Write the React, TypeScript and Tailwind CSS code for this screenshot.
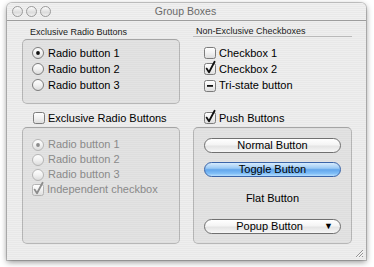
import React from "react";

const FONT = { fontFamily: '"Liberation Sans", Arial, sans-serif' };

function CheckBox({ state, disabled }: { state: "off" | "on" | "mixed"; disabled?: boolean }) {
  const border = disabled ? "#b4b4b4" : "#7c7c7c";
  const mark = disabled ? "#8c8c8c" : "#111111";
  return (
    <svg width="12" height="12" viewBox="0 0 12 12" className="shrink-0 overflow-visible">
      <defs>
        <linearGradient id="cbg" x1="0" y1="0" x2="0" y2="1">
          <stop offset="0" stopColor="#ffffff" />
          <stop offset="0.5" stopColor="#f1f1f1" />
          <stop offset="1" stopColor="#dcdcdc" />
        </linearGradient>
      </defs>
      <rect x="0.5" y="0.5" width="11" height="11" rx="2" fill="url(#cbg)" stroke={border} />
      {state === "on" && (
        <path d="M2.6 5.6 L5 9.2 L10.6 -1.2" stroke={mark} strokeWidth="1.8" fill="none" strokeLinecap="round" strokeLinejoin="round" />
      )}
      {state === "mixed" && <rect x="3" y="5" width="6" height="1.8" fill={mark} />}
    </svg>
  );
}

function Radio({ on, disabled }: { on?: boolean; disabled?: boolean }) {
  const border = disabled ? "#b4b4b4" : "#7c7c7c";
  const dot = disabled ? "#8c8c8c" : "#111111";
  return (
    <svg width="12" height="12" viewBox="0 0 12 12" className="shrink-0">
      <defs>
        <linearGradient id="rbg" x1="0" y1="0" x2="0" y2="1">
          <stop offset="0" stopColor="#ffffff" />
          <stop offset="0.5" stopColor="#f1f1f1" />
          <stop offset="1" stopColor="#d9d9d9" />
        </linearGradient>
      </defs>
      <circle cx="6" cy="6" r="5.5" fill="url(#rbg)" stroke={border} />
      {on && <circle cx="6" cy="6" r="1.9" fill={dot} />}
    </svg>
  );
}

function RadioRow({ label, on, disabled, h = "h-[16px]" }: { label: string; on?: boolean; disabled?: boolean; h?: string }) {
  return (
    <div className={`${h} flex items-center gap-[4px]`}>
      <Radio on={on} disabled={disabled} />
      <span className={`text-[11px] leading-none ${disabled ? "text-[#8a8a8a]" : "text-black"}`}>{label}</span>
    </div>
  );
}

function CheckRow({ label, state, disabled, h = "h-[16px]" }: { label: string; state: "off" | "on" | "mixed"; disabled?: boolean; h?: string }) {
  return (
    <div className={`${h} flex items-center gap-[3px]`}>
      <CheckBox state={state} disabled={disabled} />
      <span className={`text-[11px] leading-none ${disabled ? "text-[#8a8a8a]" : "text-black"}`}>{label}</span>
    </div>
  );
}

function Light() {
  return (
    <div className="w-[11px] h-[11px] rounded-full border border-[#9a9a9a] bg-[image:linear-gradient(to_bottom,#fbfbfb,#dcdcdc_60%,#f0f0f0)]" />
  );
}

const boxCls =
  "rounded-[5px] border border-[rgba(0,0,0,0.2)] border-t-[rgba(0,0,0,0.28)] bg-[rgba(0,0,0,0.045)]";

const pillCls =
  "h-[15px] rounded-full border border-[#707070] bg-[image:linear-gradient(to_bottom,#ffffff_0%,#f4f4f4_45%,#e4e4e4_55%,#f7f7f7_100%)] flex items-center justify-center text-[11px] leading-none text-black";

export default function App() {
  return (
    <div className="w-[374px] h-[267px] bg-white overflow-hidden" style={FONT}>
      <div className="relative ml-[7px] mt-[3px] w-[359px] h-[257px] rounded-t-[5px] flex flex-col shadow-[0_2px_6px_rgba(0,0,0,0.45),0_0_0_1px_rgba(0,0,0,0.18)] bg-[#ededed] bg-[image:repeating-linear-gradient(to_bottom,#eeeeee_0px,#eeeeee_1px,#e8e8e8_1px,#e8e8e8_2px)]">
        {/* Title bar */}
        <div className="h-[18px] shrink-0 border-b border-[#9d9d9d] rounded-t-[5px] grid grid-cols-[1fr_auto_1fr] items-center bg-[image:repeating-linear-gradient(to_bottom,#f0f0f0_0px,#f0f0f0_1px,#e9e9e9_1px,#e9e9e9_2px)]">
          <div className="flex items-center gap-[3px] pl-[5px]">
            <Light />
            <Light />
            <Light />
          </div>
          <div className="text-[10.5px] leading-none text-[#6a6a6a] pr-[2px]">Group Boxes</div>
          <div />
        </div>

        {/* Content */}
        <div className="flex-1 flex gap-[13px] pl-[15px] pr-[14px] pt-[5px]">
          {/* Left column */}
          <div className="w-[158px] flex flex-col">
            <div className="h-[13px] pl-[8px] text-[9px] leading-[12px] text-[#1a1a1a]">Exclusive Radio Buttons</div>
            <div className={`${boxCls} h-[65px] pt-[5px] pl-[9px]`}>
              <RadioRow label="Radio button 1" on />
              <RadioRow label="Radio button 2" />
              <RadioRow label="Radio button 3" />
            </div>
            <div className="mt-[7px] mb-[2px] pl-[11px]">
              <CheckRow label="Exclusive Radio Buttons" state="off" h="h-[14px]" />
            </div>
            <div className={`${boxCls} h-[117px] pt-[9px] pl-[9px]`}>
              <RadioRow label="Radio button 1" on disabled h="h-[15px]" />
              <RadioRow label="Radio button 2" disabled h="h-[15px]" />
              <RadioRow label="Radio button 3" disabled h="h-[15px]" />
              <CheckRow label="Independent checkbox" state="on" disabled h="h-[15px]" />
            </div>
          </div>

          {/* Right column */}
          <div className="w-[159px] flex flex-col">
            <div className="h-[11px] mb-[2px] border-b border-[#b9b9b9] pl-[3px] text-[9px] leading-[11px] text-[#1a1a1a]">
              Non-Exclusive Checkboxes
            </div>
            <div className="h-[65px] pt-[6px] pl-[11px]">
              <CheckRow label="Checkbox 1" state="off" />
              <CheckRow label="Checkbox 2" state="on" />
              <CheckRow label="Tri-state button" state="mixed" h="h-[17px]" />
            </div>
            <div className="mt-[7px] mb-[2px] pl-[11px]">
              <CheckRow label="Push Buttons" state="on" h="h-[14px]" />
            </div>
            <div className={`${boxCls} h-[117px] pt-[10px] pl-[10px] pr-[10px] flex flex-col`}>
              <div className={pillCls}>Normal Button</div>
              <div className="mt-[9px] h-[15px] rounded-full border border-[#3a64a8] bg-[image:linear-gradient(to_bottom,#d6ebfd_0%,#9ccaf4_40%,#62a6ec_52%,#7fbdf6_80%,#b8e0ff_100%)] flex items-center justify-center text-[11px] leading-none text-black">
                Toggle Button
              </div>
              <div className="mt-[14px] h-[14px] flex items-center justify-center text-[11px] leading-none text-black">
                Flat Button
              </div>
              <div className={`${pillCls} mt-[14px] !justify-between pl-[10px] pr-[7px]`}>
                <span className="flex-1 text-center">Popup Button</span>
                <span className="text-[9px] leading-none">▼</span>
              </div>
            </div>
          </div>
        </div>

        {/* Resize grip */}
        <svg width="10" height="10" viewBox="0 0 10 10" className="absolute right-[2px] bottom-[2px]">
          <path d="M9 2 L2 9 M9 5 L5 9 M9 8 L8 9" stroke="#8a8a8a" strokeWidth="0.9" />
          <path d="M9.6 2.6 L2.6 9.6 M9.6 5.6 L5.6 9.6" stroke="#ffffff" strokeWidth="0.6" />
        </svg>
      </div>
    </div>
  );
}
